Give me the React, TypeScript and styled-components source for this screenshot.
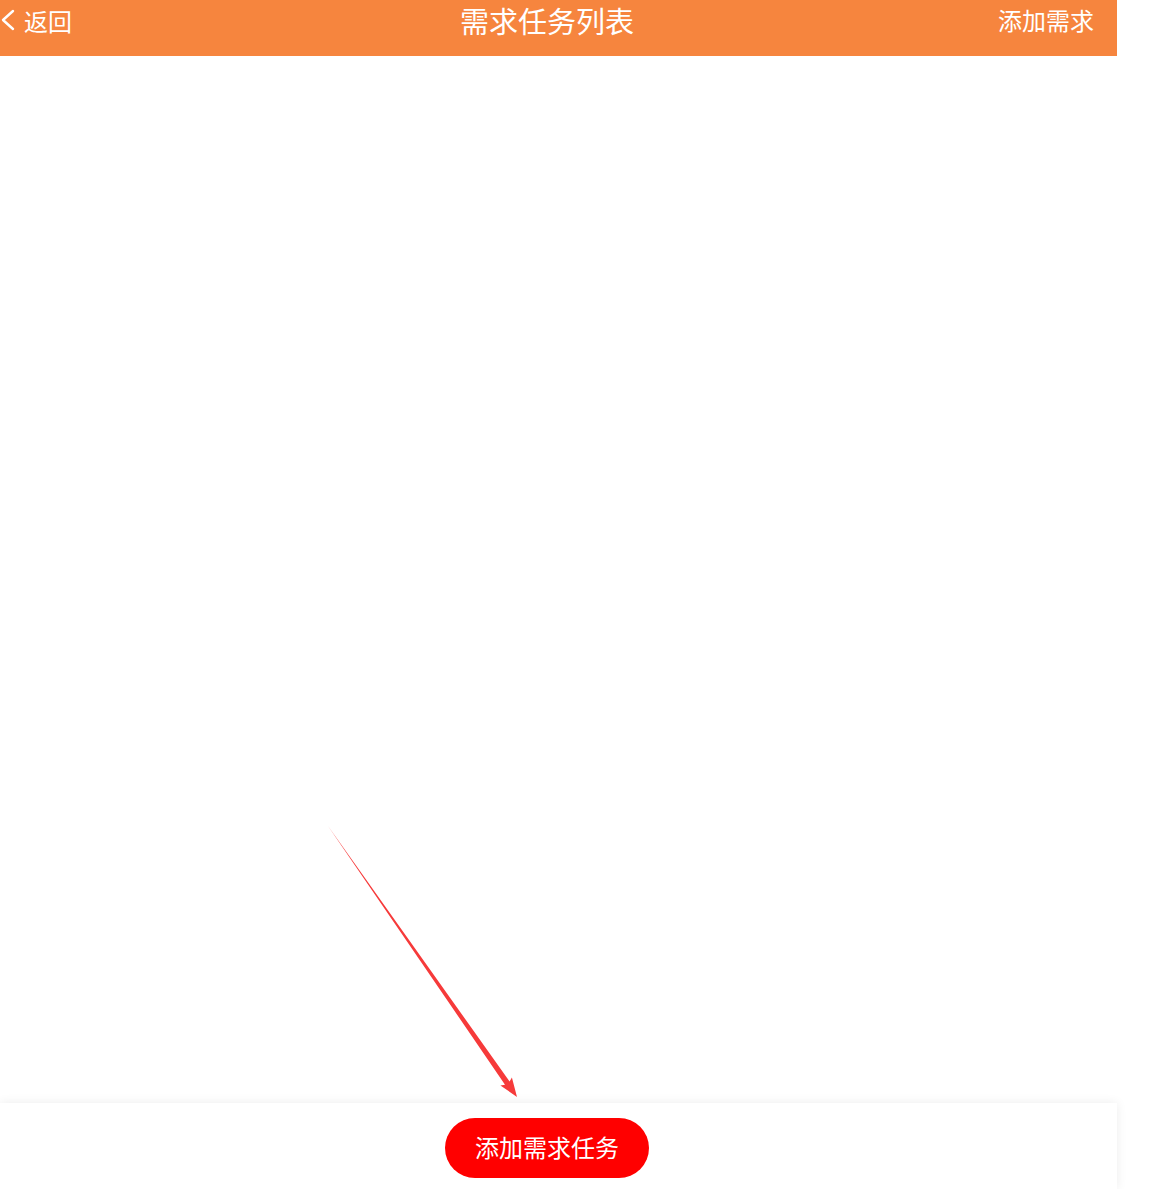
import React from "react";
import styled, { createGlobalStyle } from "styled-components";

const Global = createGlobalStyle`
  html, body { margin: 0; padding: 0; background: #ffffff; }
  body { font-family: "Noto Sans CJK SC", "Noto Sans", sans-serif; }
`;

const Page = styled.div`
  position: relative;
  width: 1117px;
  min-height: 100vh;
  display: flex;
  flex-direction: column;
  background: #ffffff;
`;

const Header = styled.header`
  height: 56px;
  background: #f6853e;
  display: grid;
  grid-template-columns: 1fr auto 1fr;
  align-items: start;
  padding: 0 23px 0 0;
  color: #ffffff;
`;

const Back = styled.div`
  display: flex;
  align-items: center;
  gap: 8px;
  height: 40px;
  font-size: 24px;
  justify-self: start;
`;

const Title = styled.h1`
  margin: 0;
  height: 40px;
  line-height: 40px;
  font-size: 29px;
  font-weight: 400;
`;

const Action = styled.div`
  justify-self: end;
  height: 40px;
  line-height: 40px;
  font-size: 24px;
`;

const Content = styled.main`
  flex: 1;
`;

const Footer = styled.footer`
  height: 86px;
  box-sizing: border-box;
  padding: 15px 23px 0 0;
  display: flex;
  justify-content: center;
  align-items: flex-start;
  background: #ffffff;
  box-shadow: 0 0 10px rgba(0, 0, 0, 0.08);
`;

const PrimaryButton = styled.button`
  width: 204px;
  height: 60px;
  border: none;
  border-radius: 30px;
  background: #ff0000;
  color: #ffffff;
  font-family: inherit;
  font-size: 24px;
  padding: 0 0 3px;
  cursor: pointer;
`;

const Annotation = styled.svg`
  position: absolute;
  left: 0;
  top: 0;
  pointer-events: none;
`;

export default function App() {
  // arrow from (328,826) to (517,1097)
  const sx = 328, sy = 826, tx = 517, ty = 1097;
  const dx = tx - sx, dy = ty - sy;
  const len = Math.hypot(dx, dy);
  const ux = dx / len, uy = dy / len;
  const px = -uy, py = ux;
  const headLen = 19, headHalf = 7, shaftHalf = 2.8;
  const bx = tx - ux * headLen, by = ty - uy * headLen;
  const pts = [
    [sx, sy],
    [bx + px * shaftHalf + ux * 2, by + py * shaftHalf + uy * 2],
    [bx + px * headHalf, by + py * headHalf],
    [tx, ty],
    [bx - px * headHalf, by - py * headHalf],
    [bx - px * shaftHalf + ux * 2, by - py * shaftHalf + uy * 2],
  ]
    .map((p) => p.map((v) => v.toFixed(1)).join(","))
    .join(" ");

  return (
    <>
      <Global />
      <Page>
        <Header>
          <Back>
            <svg width="16" height="22" viewBox="0 0 16 22" fill="none">
              <path d="M13 2 L3 11 L13 20" stroke="#ffffff" strokeWidth="2.4" strokeLinecap="round" strokeLinejoin="round" />
            </svg>
            <span>返回</span>
          </Back>
          <Title>需求任务列表</Title>
          <Action>添加需求</Action>
        </Header>
        <Content />
        <Footer>
          <PrimaryButton>添加需求任务</PrimaryButton>
        </Footer>
        <Annotation width="1159" height="1189" viewBox="0 0 1159 1189">
          <polygon points={pts} fill="#f63a3a" />
        </Annotation>
      </Page>
    </>
  );
}
